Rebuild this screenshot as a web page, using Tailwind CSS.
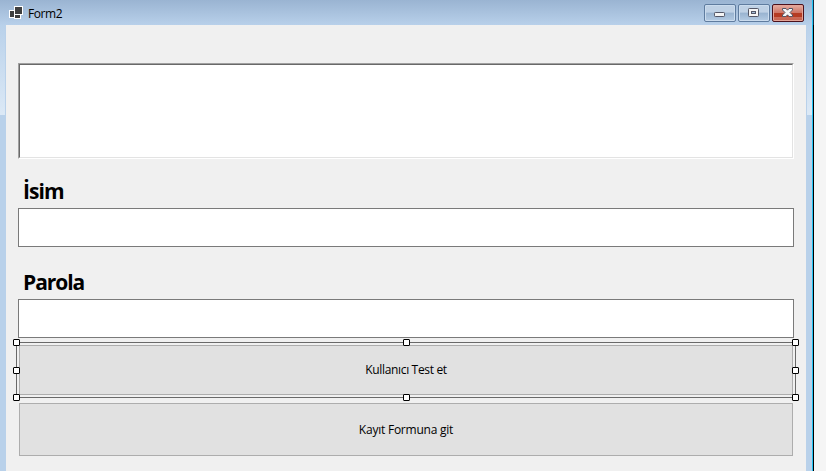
<!DOCTYPE html>
<html lang="tr">
<head>
<meta charset="utf-8">
<title>Form2</title>
<script src="https://cdn.jsdelivr.net/npm/@tailwindcss/browser@4"></script>
</head>
<body class="h-[471px] w-[826px] overflow-hidden bg-[#f5f5f5] text-black font-['Open_Sans','Noto_Sans',sans-serif]">
<div class="flex h-[471px]">
  <div class="flex w-[812px] flex-col bg-[#b9d1ea]">
    <header class="flex h-[25px] shrink-0 items-start bg-linear-to-b from-[#9ab4d2] to-[#b8d0ea] pl-[9px] pr-2">
      <svg class="mt-[6px] shrink-0" width="14" height="13" viewBox="0 0 14 13" shape-rendering="crispEdges">
        <path fill="#fff" d="M0 4H5V0H14V9H12V13H5V12H0Z"/>
        <path fill="#3f3f3f" d="M6 1H13V8H6ZM1 5H5V11H1ZM6 9H11V12H6Z"/>
      </svg>
      <span class="ml-[5px] mt-[6px] text-[12px] leading-[16px] tracking-[-0.4px]">Form2</span>
      <div class="ml-auto mt-1 flex gap-[2px]">
        <button class="h-[18px] w-8 rounded-[2px] border border-[#5f7c9f] bg-linear-to-b from-[#bfd1e5] from-45% via-[#98b3d0] via-50% to-[#b4cbe3] shadow-[inset_0_0_0_1px_#cbdcee]">
          <svg width="30" height="16" viewBox="0 0 30 16"><rect x="9.5" y="7.5" width="10" height="4" rx=".8" fill="#f5f5f5" stroke="#535666"/></svg>
        </button>
        <button class="h-[18px] w-8 rounded-[2px] border border-[#5f7c9f] bg-linear-to-b from-[#bfd1e5] from-45% via-[#98b3d0] via-50% to-[#b4cbe3] shadow-[inset_0_0_0_1px_#cbdcee]">
          <svg width="30" height="16" viewBox="0 0 30 16"><rect x="9.5" y="3.5" width="10" height="8" rx=".8" fill="#f5f5f5" stroke="#535666"/><rect x="12.5" y="6.5" width="4" height="2" fill="#a5bfda" stroke="#535666"/></svg>
        </button>
        <button class="h-[18px] w-8 rounded-[2px] border border-[#4b111c] bg-linear-to-b from-[#e3a89c] from-5% via-[#cf7869] via-45% to-[#c8614c] shadow-[inset_0_0_0_1px_#e4a497]">
          <svg width="30" height="16" viewBox="0 0 30 16"><path fill="#b53b23" d="M1 8H29V12H1Z"/><path fill="#f5f5f5" stroke="#535666" d="M9.5 3.5H13L14.5 5.200L16 3.5H19.5V5L17 7.5L19.5 10V11.5H16L14.5 9.800L13 11.5H9.5V10L12 7.5L9.5 5Z"/></svg>
        </button>
      </div>
    </header>
    <div class="flex min-h-0 flex-1">
      <div class="h-full w-[6px] shrink-0"><div class="h-[90px] w-[5px] bg-linear-to-b from-[#b9d1ea] to-[#dce9f6]"></div></div>
      <main class="flex w-[800px] shrink-0 flex-col bg-[#f0f0f0] px-3 pt-[38px]">
        <div class="h-24 w-[776px] shrink-0 border border-b-white border-l-[#a0a0a0] border-r-white border-t-[#a0a0a0]">
          <div class="h-full border border-b-[#e3e3e3] border-l-[#696969] border-r-[#e3e3e3] border-t-[#696969] bg-white"></div>
        </div>
        <label class="mt-4 h-[33px] shrink-0 pl-[5px] text-[21px] font-bold leading-[32px] tracking-[-0.9px]">İsim</label>
        <div class="h-[39px] shrink-0 border border-[#7a7a7a] bg-white"></div>
        <label class="mt-[19px] h-[33px] shrink-0 pl-[5px] text-[21px] font-bold leading-[32px] tracking-[-1.05px]">Parola</label>
        <div class="h-[39px] shrink-0 border border-[#7a7a7a] bg-white"></div>
        <div class="relative -mx-[2px] mt-1 h-14 shrink-0 border border-[#696969] p-[2px]">
          <button class="block h-[50px] w-[774px] border border-[#adadad] bg-[#e1e1e1] text-[12px] leading-none"><span class="tracking-[-0.33px]">Kullanıcı Test et</span></button>
          <i class="absolute -left-1 -top-1 size-[7px] rounded-[1px] border border-black bg-white"></i>
          <i class="absolute left-[386px] -top-1 size-[7px] rounded-[1px] border border-black bg-white"></i>
          <i class="absolute -right-1 -top-1 size-[7px] rounded-[1px] border border-black bg-white"></i>
          <i class="absolute -left-1 top-6 size-[7px] rounded-[1px] border border-black bg-white"></i>
          <i class="absolute -right-1 top-6 size-[7px] rounded-[1px] border border-black bg-white"></i>
          <i class="absolute -bottom-1 -left-1 size-[7px] rounded-[1px] border border-black bg-white"></i>
          <i class="absolute -bottom-1 left-[386px] size-[7px] rounded-[1px] border border-black bg-white"></i>
          <i class="absolute -bottom-1 -right-1 size-[7px] rounded-[1px] border border-black bg-white"></i>
        </div>
        <button class="ml-px mt-[5px] h-[53px] w-[774px] shrink-0 border border-[#adadad] bg-[#e1e1e1] text-[12px] leading-none"><span class="tracking-[-0.23px]">Kayıt Formuna git</span></button>
      </main>
      <div class="h-full flex-1 pl-px"><div class="h-[90px] bg-linear-to-b from-[#b9d1ea] to-[#dce9f6]"></div></div>
    </div>
  </div>
  <div class="w-px bg-[#22c4f5]"></div>
  <div class="w-px bg-black"><div class="h-[25px] bg-[#142c42]"></div></div>
</div>
</body>
</html>
